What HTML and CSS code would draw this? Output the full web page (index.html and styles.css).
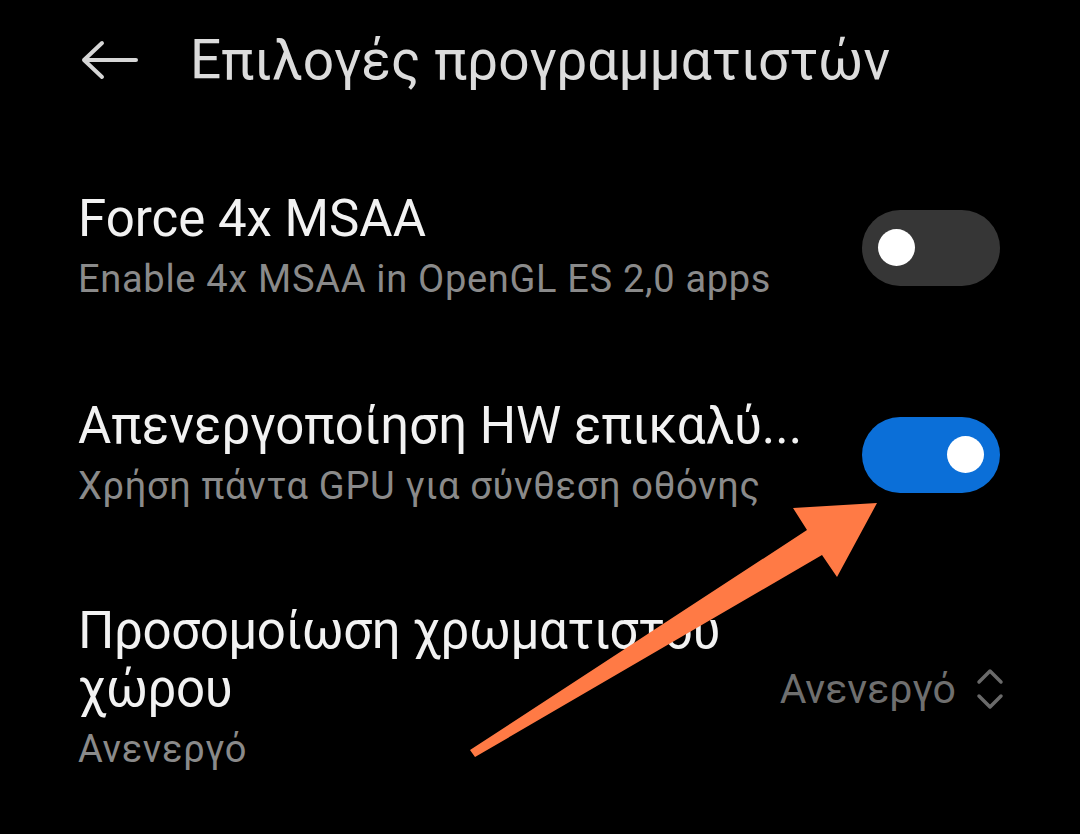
FILE: index.html
```html
<!DOCTYPE html>
<html lang="el">
<head>
<meta charset="utf-8">
<link rel="stylesheet" href="styles.css">
</head>
<body>
<div class="screen">
  <header class="topbar">
    <svg class="back" width="58" height="40" viewBox="0 0 58 40"><path d="M56 20H4M22 3L4 20L22 37" fill="none" stroke="#d6d6d6" stroke-width="4" stroke-linecap="round" stroke-linejoin="round"/></svg>
    <h1 class="page-title">Επιλογές προγραμματιστών</h1>
  </header>

  <div class="item item-first">
    <div class="text">
      <div class="title">Force 4x MSAA</div>
      <div class="sub">Enable 4x MSAA in OpenGL ES 2,0 apps</div>
    </div>
    <div class="switch off"><span class="knob"></span></div>
  </div>

  <div class="item item-second">
    <div class="text">
      <div class="title">Απενεργοποίηση HW επικαλύ...</div>
      <div class="sub">Χρήση πάντα GPU για σύνθεση οθόνης</div>
    </div>
    <div class="switch on"><span class="knob"></span></div>
  </div>

  <div class="item item-third">
    <div class="text">
      <div class="title wrap">Προσομοίωση χρωματιστού χώρου</div>
      <div class="sub">Ανενεργό</div>
    </div>
    <div class="value">
      <span>Ανενεργό</span>
      <svg width="28" height="44" viewBox="0 0 28 44"><path d="M3 15L14 4L25 15M3 29L14 40L25 29" fill="none" stroke="#6a6a6a" stroke-width="3.5" stroke-linecap="round" stroke-linejoin="round"/></svg>
    </div>
  </div>
</div>
<svg class="annot" width="1080" height="834" viewBox="0 0 1080 834"><polygon points="470,750 475,757 822,555 837,577 877,503 793,508 807,530" fill="#ff7a45"/></svg>
</body>
</html>
```
FILE: styles.css
```css
html, body {
  margin: 0;
  padding: 0;
  background: #000;
}
body {
  width: 1080px;
  height: 834px;
  overflow: hidden;
  position: relative;
  font-family: Roboto, "Noto Sans", sans-serif;
}
.screen {
  padding: 0 80px 0 78px;
}
.topbar {
  display: flex;
  align-items: center;
  height: 120px;
  gap: 52px;
}
.back {
  margin-left: 2px;
  flex: none;
}
.page-title {
  margin: 0;
  font-size: 55px;
  font-weight: 400;
  color: #dcdcdc;
}
.item {
  display: flex;
  align-items: center;
  justify-content: space-between;
}
.item-first { margin-top: 70px; }
.item-second { margin-top: 92px; }
.item-third { margin-top: 90px; }
.text { min-width: 0; }
.title {
  font-size: 51px;
  line-height: 58px;
  color: #f2f2f2;
  white-space: nowrap;
}
.title.wrap {
  white-space: normal;
  width: 660px;
  letter-spacing: -0.4px;
}
.sub {
  font-size: 38px;
  letter-spacing: 0.7px;
  line-height: 52px;
  margin-top: 5px;
  color: #8a8a8a;
  white-space: nowrap;
}
.switch {
  flex: none;
  width: 138px;
  height: 76px;
  border-radius: 38px;
  display: flex;
  align-items: center;
  padding: 0 16px;
  box-sizing: border-box;
}
.switch.off { background: #363636; justify-content: flex-start; }
.switch.on { background: #0b6fd8; justify-content: flex-end; }
.knob {
  width: 37px;
  height: 37px;
  border-radius: 50%;
  background: #fff;
}
.value {
  display: flex;
  align-items: center;
  gap: 20px;
  font-size: 41px;
  color: #6f6f6f;
  margin-right: -4px;
}
.annot {
  position: absolute;
  left: 0;
  top: 0;
  pointer-events: none;
}
```
